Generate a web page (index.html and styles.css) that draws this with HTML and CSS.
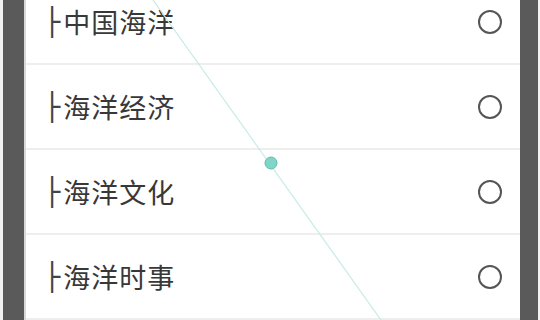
FILE: index.html
```html
<!DOCTYPE html>
<html lang="zh-CN">
<head>
    <meta charset="UTF-8">
    <meta name="viewport" content="width=device-width, initial-scale=1.0">
    <title>海洋栏目</title>
    <link rel="stylesheet" href="styles.css">
</head>
<body>
    <div class="frame">
        <div class="panel">
            <div class="option-list">
                <label class="option-row">
                    <span class="option-name"><span class="tree-mark">├</span>中国海洋</span>
                    <span class="radio"></span>
                </label>
                <label class="option-row">
                    <span class="option-name"><span class="tree-mark">├</span>海洋经济</span>
                    <span class="radio"></span>
                </label>
                <label class="option-row">
                    <span class="option-name"><span class="tree-mark">├</span>海洋文化</span>
                    <span class="radio"></span>
                </label>
                <label class="option-row">
                    <span class="option-name"><span class="tree-mark">├</span>海洋时事</span>
                    <span class="radio"></span>
                </label>
            </div>
        </div>
    </div>

    <svg class="touch-trace" width="540" height="320" viewBox="0 0 540 320">
        <line x1="153" y1="0" x2="381" y2="320" stroke="#c6ebe6" stroke-width="1.2"/>
        <circle cx="271" cy="163" r="6" fill="#7fd6c6" stroke="#5fbcaa" stroke-width="1"/>
    </svg>
</body>
</html>
```

FILE: styles.css
```css
* {
    margin: 0;
    padding: 0;
    box-sizing: border-box;
}

body {
    width: 540px;
    height: 320px;
    overflow: hidden;
    background: #f2f2f2;
    padding: 0 2px 0 3px;
    font-family: "DejaVu Sans", "Noto Sans CJK SC", sans-serif;
    color: #333;
    position: relative;
}

.frame {
    height: 100%;
    background: #5a5a5a;
    padding: 0 18px 0 21px;
}

.panel {
    height: 100%;
    background: #fff;
    border-left: 2px solid #d9d9d9;
    overflow: hidden;
}

.option-list {
    margin-top: -20px;
}

.option-row {
    display: flex;
    align-items: center;
    justify-content: space-between;
    height: 85px;
    padding: 0 18px 0 16px;
    border-bottom: 2px solid #eeeeee;
}

.option-name {
    font-family: "Noto Sans CJK SC", sans-serif;
    font-size: 27px;
    letter-spacing: 1px;
    line-height: 1;
    display: flex;
    align-items: center;
    color: #383838;
}

.tree-mark {
    font-family: "DejaVu Sans", sans-serif;
    font-size: 27px;
    letter-spacing: 0;
    color: #444;
    margin-left: 2px;
    margin-right: 3px;
}

.radio {
    width: 24px;
    height: 24px;
    border: 2px solid #555;
    border-radius: 50%;
}

.touch-trace {
    position: absolute;
    top: 0;
    left: 0;
    pointer-events: none;
}
```
